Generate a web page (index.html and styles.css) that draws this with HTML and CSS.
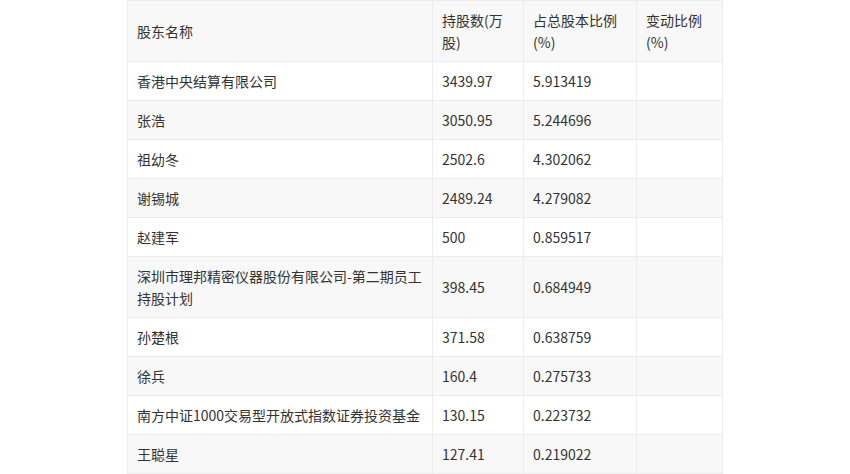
FILE: index.html
```html
<!DOCTYPE html>
<html lang="zh-CN">
<head>
<meta charset="utf-8">
<title>股东</title>
<link rel="stylesheet" href="styles.css">
</head>
<body>
<table class="holders">
  <colgroup>
    <col class="c1"><col class="c2"><col class="c3"><col class="c4">
  </colgroup>
  <tbody>
    <tr class="gray"><td>股东名称</td><td>持股数(万股)</td><td>占总股本比例(%)</td><td>变动比例(%)</td></tr>
    <tr><td>香港中央结算有限公司</td><td>3439.97</td><td>5.913419</td><td></td></tr>
    <tr class="gray"><td>张浩</td><td>3050.95</td><td>5.244696</td><td></td></tr>
    <tr><td>祖幼冬</td><td>2502.6</td><td>4.302062</td><td></td></tr>
    <tr class="gray"><td>谢锡城</td><td>2489.24</td><td>4.279082</td><td></td></tr>
    <tr><td>赵建军</td><td>500</td><td>0.859517</td><td></td></tr>
    <tr class="gray"><td>深圳市理邦精密仪器股份有限公司-第二期员工持股计划</td><td>398.45</td><td>0.684949</td><td></td></tr>
    <tr><td>孙楚根</td><td>371.58</td><td>0.638759</td><td></td></tr>
    <tr class="gray"><td>徐兵</td><td>160.4</td><td>0.275733</td><td></td></tr>
    <tr><td>南方中证1000交易型开放式指数证券投资基金</td><td>130.15</td><td>0.223732</td><td></td></tr>
    <tr class="gray"><td>王聪星</td><td>127.41</td><td>0.219022</td><td></td></tr>
  </tbody>
</table>
</body>
</html>
```
FILE: styles.css
```css
html, body {
  margin: 0;
  padding: 0;
  background: #ffffff;
}
.holders {
  margin: 0 auto;
  width: 595px;
  table-layout: fixed;
  border-collapse: collapse;
  font-family: "Noto Sans CJK SC", "Noto Sans", sans-serif;
  font-size: 14px;
  line-height: 22px;
  color: #333333;
}
.c1 { width: 305px; }
.c2 { width: 91px; }
.c3 { width: 113px; }
.c4 { width: 86px; }
.holders td {
  border: 1px solid #ececec;
  padding: 8px 9px;
  vertical-align: middle;
  word-break: break-all;
}
.holders tr.gray td {
  background: #f8f8f8;
}
```
